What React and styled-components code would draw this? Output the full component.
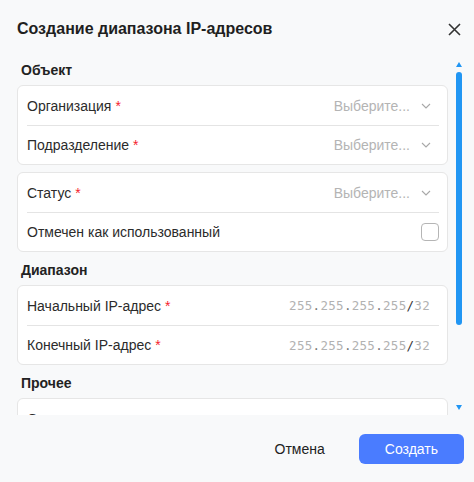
import styled, { createGlobalStyle } from "styled-components";

const Global = createGlobalStyle`
  body {
    margin: 0;
    background: #f8f9fa;
    font-family: "Liberation Sans", Arial, sans-serif;
  }
`;

const Dialog = styled.div`
  width: 474px;
  height: 482px;
  display: flex;
  flex-direction: column;
  background: #f8f9fa;
`;

const Header = styled.div`
  display: flex;
  align-items: center;
  justify-content: space-between;
  padding: 19px 13px 13px 17px;
`;

const Title = styled.div`
  font-size: 16px;
  line-height: 20px;
  font-weight: 700;
  color: #1f1f1f;
`;

const CloseButton = styled.button`
  width: 14px;
  height: 14px;
  padding: 0;
  border: none;
  background: none;
  display: flex;
  align-items: center;
  justify-content: center;
  cursor: pointer;
`;

const Body = styled.div`
  flex: 1;
  display: flex;
  min-height: 0;
`;

const Content = styled.div`
  flex: 1;
  overflow: hidden;
  padding: 0 7px 0 17px;
`;

const SectionTitle = styled.div`
  font-size: 14px;
  line-height: 18px;
  font-weight: 700;
  color: #222;
  padding: 9px 4px 6px;
`;

const Card = styled.div`
  background: #fff;
  border: 1px solid #e6e6e6;
  border-radius: 6px;
  & + & {
    margin-top: 7px;
  }
`;

const Row = styled.div`
  height: 39px;
  box-sizing: border-box;
  margin: 0 8px 0 9px;
  display: flex;
  align-items: center;
  justify-content: space-between;
  & + & {
    border-top: 1px solid #e4e4e4;
  }
`;

const Label = styled.span`
  font-size: 14px;
  color: #2b2b2b;
`;

const Req = styled.span`
  color: #f5222d;
  margin-left: 4px;
`;

const Select = styled.div`
  display: flex;
  align-items: center;
  gap: 11px;
  padding-right: 8px;
  font-size: 14px;
  color: #b4b4b4;
`;

const IpValue = styled.div`
  font-family: "DejaVu Sans Mono", "Liberation Mono", monospace;
  font-size: 12.5px;
  padding-right: 9px;
  color: #b2b2b2;
  letter-spacing: 0.3px;
`;

const Sep = styled.span`
  color: ${(p) => (p.$strong ? "#333" : "#777")};
`;

const Checkbox = styled.span`
  width: 18px;
  height: 18px;
  box-sizing: border-box;
  border: 1px solid #b5b5b5;
  border-radius: 4px;
  background: #fff;
`;

const ScrollTrack = styled.div`
  width: 7px;
  margin-right: 12px;
  padding: 10px 0 5px;
  display: flex;
  flex-direction: column;
  align-items: center;
`;

const Arrow = styled.span`
  width: 0;
  height: 0;
  border-left: 3.5px solid transparent;
  border-right: 3.5px solid transparent;
  ${(p) =>
    p.$down
      ? "border-top: 5px solid #2196f3; margin-top: auto;"
      : "border-bottom: 5px solid #2196f3;"}
`;

const Thumb = styled.div`
  width: 6px;
  height: 253px;
  margin-top: 5px;
  border-radius: 3px;
  background: #2196f3;
`;

const Footer = styled.div`
  display: flex;
  justify-content: flex-end;
  gap: 8px;
  padding: 19px 10px 0;
  height: 67px;
  box-sizing: border-box;
`;

const Button = styled.button`
  height: 30px;
  padding: 0 26px;
  border: none;
  border-radius: 6px;
  font-family: inherit;
  font-size: 14px;
  cursor: pointer;
  background: ${(p) => (p.$primary ? "#4a7cff" : "transparent")};
  color: ${(p) => (p.$primary ? "#fff" : "#222")};
`;

const Chevron = () => (
  <svg width="10" height="6" viewBox="0 0 10 6">
    <polyline points="1,1 5,5 9,1" fill="none" stroke="#a8a8a8" strokeWidth="1.1" />
  </svg>
);

const SelectField = ({ label }) => (
  <Row>
    <Label>
      {label}
      <Req>*</Req>
    </Label>
    <Select>
      Выберите...
      <Chevron />
    </Select>
  </Row>
);

const IpField = ({ label }) => (
  <Row>
    <Label>
      {label}
      <Req>*</Req>
    </Label>
    <IpValue>
      255<Sep>.</Sep>255<Sep>.</Sep>255<Sep>.</Sep>255<Sep $strong>/</Sep>32
    </IpValue>
  </Row>
);

export default function App() {
  return (
    <>
      <Global />
      <Dialog>
        <Header>
          <Title>Создание диапазона IP-адресов</Title>
          <CloseButton aria-label="Закрыть">
            <svg width="13" height="13" viewBox="0 0 13 13">
              <path d="M1 1L12 12M12 1L1 12" stroke="#333" strokeWidth="1.6" />
            </svg>
          </CloseButton>
        </Header>
        <Body>
          <Content>
            <SectionTitle>Объект</SectionTitle>
            <Card>
              <SelectField label="Организация" />
              <SelectField label="Подразделение" />
            </Card>
            <Card>
              <SelectField label="Статус" />
              <Row>
                <Label>Отмечен как использованный</Label>
                <Checkbox />
              </Row>
            </Card>
            <SectionTitle>Диапазон</SectionTitle>
            <Card>
              <IpField label="Начальный IP-адрес" />
              <IpField label="Конечный IP-адрес" />
            </Card>
            <SectionTitle>Прочее</SectionTitle>
            <Card>
              <Row>
                <Label>Описание</Label>
              </Row>
            </Card>
          </Content>
          <ScrollTrack>
            <Arrow />
            <Thumb />
            <Arrow $down />
          </ScrollTrack>
        </Body>
        <Footer>
          <Button>Отмена</Button>
          <Button $primary>Создать</Button>
        </Footer>
      </Dialog>
    </>
  );
}
